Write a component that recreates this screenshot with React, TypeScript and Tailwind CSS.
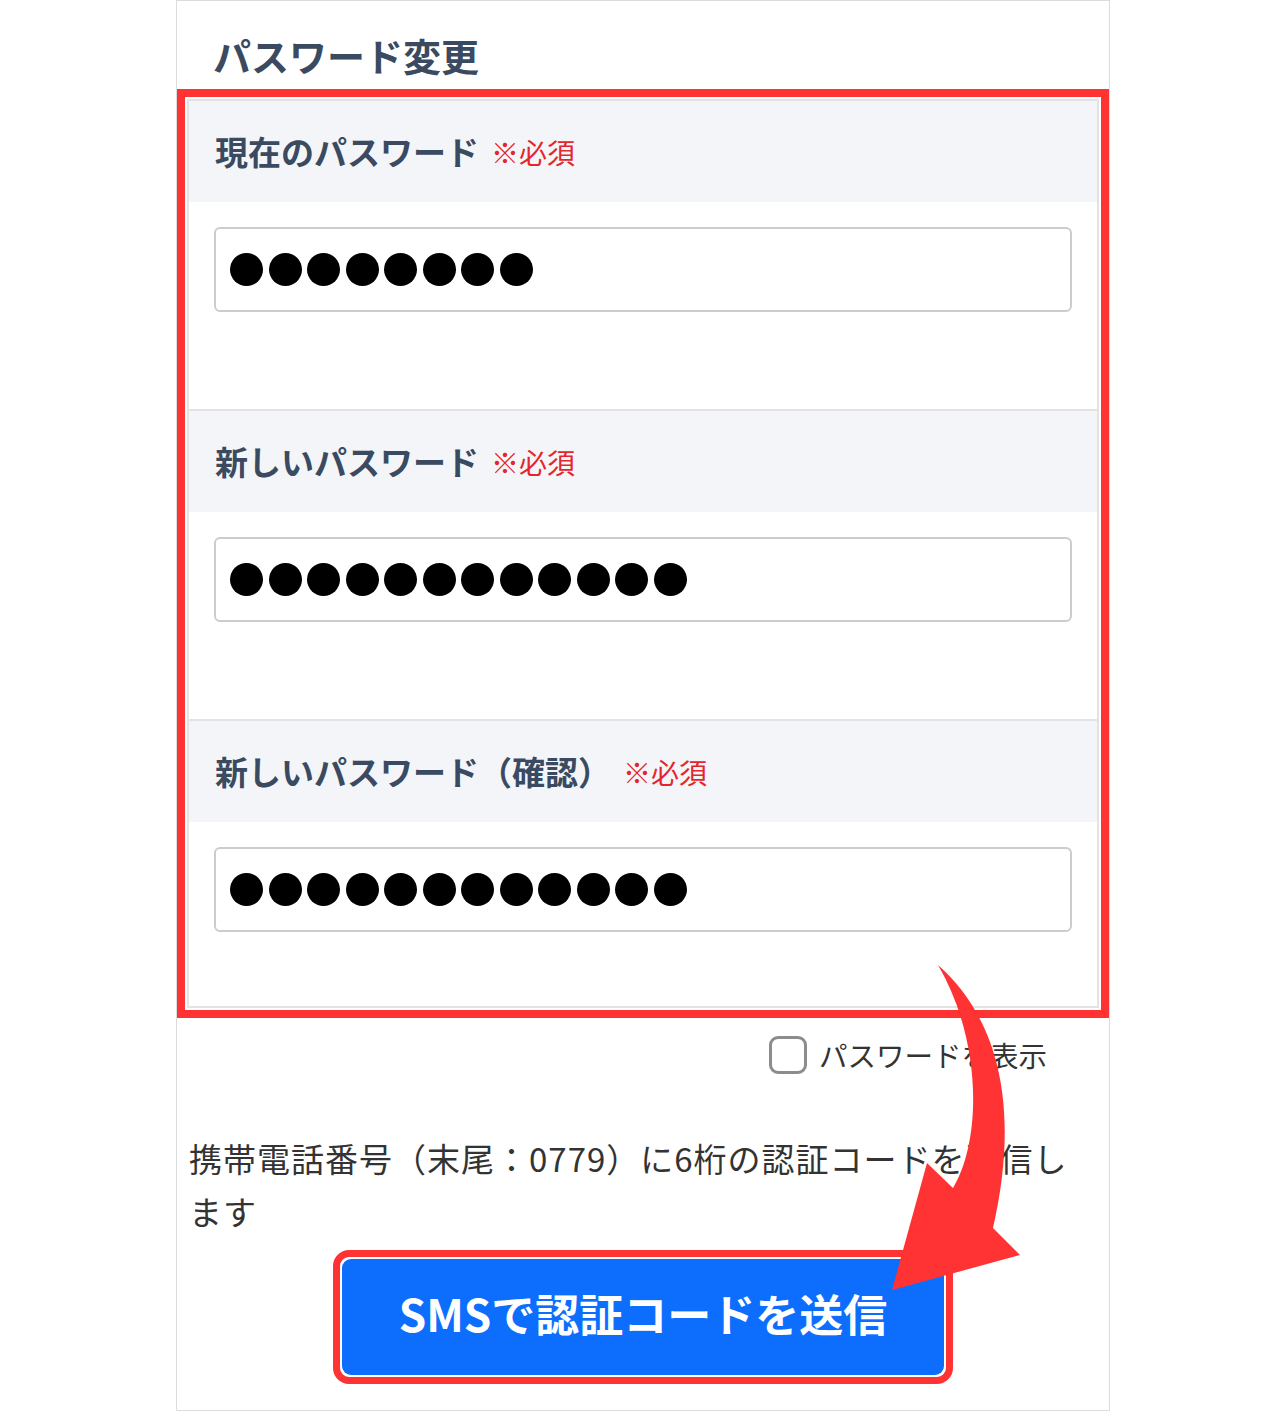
import React from "react";

const fields = [
  { label: "現在のパスワード", dots: 8, gap: "ml-3", pb: "pb-[97px]" },
  { label: "新しいパスワード", dots: 12, gap: "ml-3", pb: "pb-[97px]" },
  { label: "新しいパスワード（確認）", dots: 12, gap: "ml-[12px]", pb: "pb-[74px]" },
];

function Dots({ count }: { count: number }) {
  return (
    <div className="flex items-center gap-[5.5px]">
      {Array.from({ length: count }).map((_, i) => (
        <span key={i} className="block w-[33px] h-[33px] rounded-full bg-black" />
      ))}
    </div>
  );
}

export default function App() {
  return (
    <div className="relative min-h-screen bg-white font-['Noto_Sans_CJK_JP',sans-serif]">
      <div className="mx-auto w-[934px] border border-[#dcdcdc] bg-white pb-[26px]">
        {/* Title */}
        <h1 className="pl-[36px] pt-[30px] pb-[10px] text-[38px] leading-[48px] font-bold text-[#3a4a60]">
          パスワード変更
        </h1>

        {/* Highlighted form */}
        <div className="border-8 border-[#ff3333] p-[2px]">
          <div className="border-2 border-[#e3e3e3]">
            {fields.map((f, i) => (
              <div key={f.label} className={i > 0 ? "border-t-2 border-[#e3e3e3]" : ""}>
                <div className="flex h-[101px] items-center bg-[#f4f5f9] px-[26px]">
                  <span className="text-[33px] font-bold text-[#3a4a60]">{f.label}</span>
                  <span className={`${f.gap} text-[28px] text-[#e3262b]`}>※必須</span>
                </div>
                <div className={`px-[25px] pt-[25px] ${f.pb}`}>
                  <div className="flex h-[85px] items-center rounded-[6px] border-2 border-[#cccccc] pl-[14px]">
                    <Dots count={f.dots} />
                  </div>
                </div>
              </div>
            ))}
          </div>
        </div>

        {/* Show password */}
        <div className="mt-[18px] flex items-center justify-end gap-[12px] pr-[62px]">
          <span className="block h-[38px] w-[38px] rounded-[9px] border-[3px] border-[#8c8c8c]" />
          <span className="text-[28.5px] leading-[38px] text-[#333333]">パスワードを表示</span>
        </div>

        {/* Description */}
        <p className="mt-[58px] px-[12px] text-[33px] leading-[53px] tracking-[1px] text-[#333333]">
          携帯電話番号（末尾：0779）に6桁の認証コードを送信し
          <br />
          ます
        </p>

        {/* Button */}
        <div className="mt-[12px] flex justify-center">
          <div className="rounded-[16px] border-[7px] border-[#ff3333] bg-white p-[2px]">
            <button className="flex h-[116px] w-[602px] items-center justify-center rounded-[9px] bg-[#0d6efd] pb-[8px] text-[44px] leading-none font-bold text-white">
              SMSで認証コードを送信
            </button>
          </div>
        </div>
      </div>

      {/* Callout arrow */}
      <svg
        className="pointer-events-none absolute left-0 top-0 h-[1412px] w-[1286px]"
        viewBox="0 0 1286 1412"
      >
        <path
          d="M938 965 C1000 1020 1020 1110 993 1228 L1020 1255 L892 1290 L927 1163 L953 1188 C982 1140 982 1040 938 965 Z"
          fill="#ff3333"
        />
      </svg>
    </div>
  );
}
